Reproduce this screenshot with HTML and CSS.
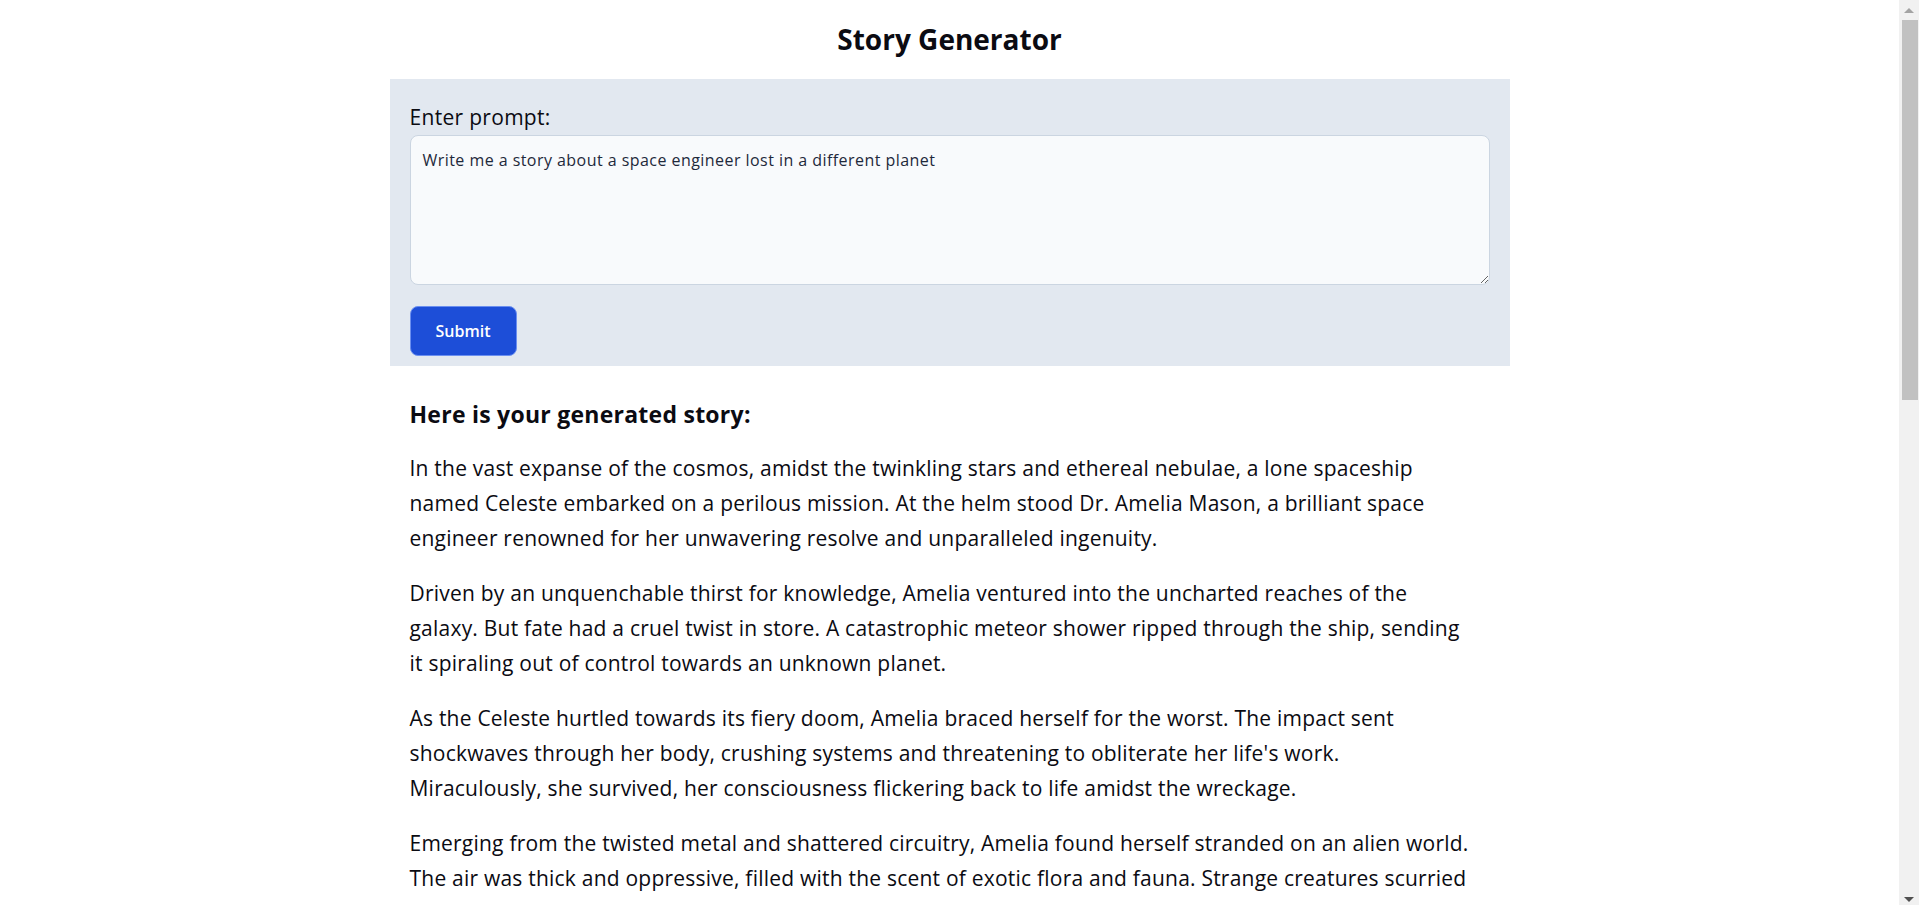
FILE: index.html
```html
<!DOCTYPE html>
<html lang="en">
<head>
<meta charset="utf-8">
<title>Story Generator</title>
<link rel="stylesheet" href="styles.css">
</head>
<body>
<main class="page">
  <h1 class="title">Story Generator</h1>
  <form class="prompt-box">
    <label class="prompt-label" for="prompt">Enter prompt:</label>
    <textarea class="prompt-input" id="prompt">Write me a story about a space engineer lost in a different planet</textarea>
    <button class="submit-btn" type="button">Submit</button>
  </form>
  <section class="story">
    <h2 class="story-heading">Here is your generated story:</h2>
    <p>In the vast expanse of the cosmos, amidst the twinkling stars and ethereal nebulae, a lone spaceship<br>named Celeste embarked on a perilous mission. At the helm stood Dr. Amelia Mason, a brilliant space<br>engineer renowned for her unwavering resolve and unparalleled ingenuity.</p>
    <p>Driven by an unquenchable thirst for knowledge, Amelia ventured into the uncharted reaches of the<br>galaxy. But fate had a cruel twist in store. A catastrophic meteor shower ripped through the ship, sending<br>it spiraling out of control towards an unknown planet.</p>
    <p>As the Celeste hurtled towards its fiery doom, Amelia braced herself for the worst. The impact sent<br>shockwaves through her body, crushing systems and threatening to obliterate her life's work.<br>Miraculously, she survived, her consciousness flickering back to life amidst the wreckage.</p>
    <p>Emerging from the twisted metal and shattered circuitry, Amelia found herself stranded on an alien world.<br>The air was thick and oppressive, filled with the scent of exotic flora and fauna. Strange creatures scurried<br>through the undergrowth, their eyes gleaming with curiosity and suspicion as they watched the newcomer.</p>
    <p>With her ship damaged beyond repair, Amelia knew that survival depended on her wits and skills. She salvaged what she could from the wreckage, assembling a makeshift shelter and a crude communication device in the hope that someone, somewhere, might hear her call.</p>
    <p>Days turned into weeks as Amelia explored her new surroundings. She discovered towering crystalline forests, rivers of shimmering liquid light, and ancient ruins that hinted at a long-lost civilization. Each discovery filled her with wonder, but also with a growing sense of isolation.</p>
    <p>One night, as twin moons rose over the horizon, Amelia's device crackled to life. A faint signal, distorted but unmistakable, echoed through the speaker. Someone had heard her. Hope surged through her veins as she worked tirelessly to strengthen the connection.</p>
    <p>Guided by the signal, a rescue vessel eventually descended through the clouds. As Amelia stepped aboard, she cast one last glance at the alien world that had tested her limits. She had been lost, but she had never truly been defeated, and the stars still called to her.</p>
  </section>
</main>
<div class="scrollbar" aria-hidden="true">
  <div class="scroll-arrow scroll-arrow-up"></div>
  <div class="scroll-thumb"></div>
  <div class="scroll-arrow scroll-arrow-down"></div>
</div>
</body>
</html>
```

FILE: styles.css
```css
html, body {
  padding: 0;
  background: #ffffff;
}

html {
  margin: 0;
}

body {
  margin: 0 20px 0 0;
  font-family: "Open Sans", "Noto Sans", sans-serif;
  color: #0b0b12;
}

.page {
  max-width: 1120px;
  margin: 0 auto;
  padding-bottom: 40px;
}

.title {
  margin: 19px 0 20px;
  font-size: 28px;
  line-height: 40px;
  font-weight: 700;
  text-align: center;
}

.prompt-box {
  display: flex;
  flex-direction: column;
  align-items: flex-start;
  background: #e2e8f0;
  padding: 24px 20px 10px;
}

.prompt-label {
  font-size: 21px;
  letter-spacing: 0.3px;
  line-height: 28px;
  margin-bottom: 4px;
}

.prompt-input {
  box-sizing: border-box;
  width: 100%;
  height: 150px;
  padding: 12px;
  border: 1px solid #cbd5e1;
  border-radius: 8px;
  background: #f8fafc;
  font-family: "Open Sans", "Noto Sans", sans-serif;
  font-size: 16px;
  letter-spacing: 0.45px;
  line-height: 24px;
  color: #1e293b;
  resize: vertical;
  outline: none;
}

.submit-btn {
  box-sizing: border-box;
  margin-top: 21px;
  width: 107px;
  height: 50px;
  border: 1px solid #6b8ff0;
  border-radius: 8px;
  background: #1d4ed8;
  color: #ffffff;
  font-family: "Open Sans", "Noto Sans", sans-serif;
  font-size: 16px;
  font-weight: 600;
  cursor: pointer;
}

.story {
  padding: 0 20px;
}

.story-heading {
  margin: 33px 0 22px;
  font-size: 23px;
  line-height: 30px;
  font-weight: 700;
  letter-spacing: 0.25px;
}

.story p {
  margin: 0 0 20px;
  font-size: 21px;
  letter-spacing: 0.22px;
  line-height: 35px;
}

/* fake browser scrollbar overlay */
.scrollbar {
  position: fixed;
  top: 0;
  right: 0;
  bottom: 0;
  width: 20px;
  background: #f1f1f1;
  display: flex;
  flex-direction: column;
  align-items: center;
}

.scroll-arrow {
  flex: 0 0 20px;
  width: 100%;
  display: flex;
  align-items: center;
  justify-content: center;
}

.scroll-arrow::before {
  content: "";
  width: 0;
  height: 0;
  border-left: 5px solid transparent;
  border-right: 5px solid transparent;
}

.scroll-arrow-up::before {
  border-bottom: 5px solid #a3a3a3;
}

.scroll-arrow-down {
  margin-top: auto;
  align-items: flex-end;
  padding-bottom: 3px;
  box-sizing: border-box;
}

.scroll-arrow-down::before {
  border-top: 5px solid #505050;
}

.scroll-thumb {
  width: 16px;
  height: 380px;
  margin-left: 2px;
  background: #c1c1c1;
}
```
